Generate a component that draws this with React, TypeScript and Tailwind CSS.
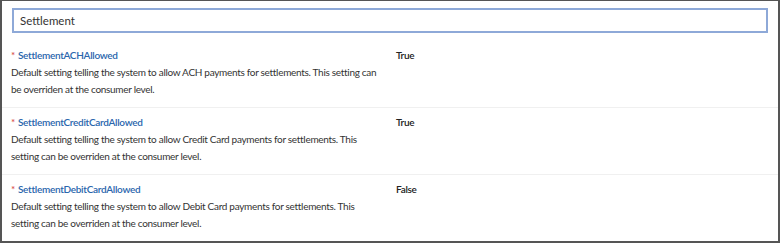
const settings = [
  {
    name: 'SettlementACHAllowed',
    lines: [
      'Default setting telling the system to allow ACH payments for settlements. This setting can',
      'be overriden at the consumer level.',
    ],
    value: 'True',
  },
  {
    name: 'SettlementCreditCardAllowed',
    lines: [
      'Default setting telling the system to allow Credit Card payments for settlements. This',
      'setting can be overriden at the consumer level.',
    ],
    value: 'True',
  },
  {
    name: 'SettlementDebitCardAllowed',
    lines: [
      'Default setting telling the system to allow Debit Card payments for settlements. This',
      'setting can be overriden at the consumer level.',
    ],
    value: 'False',
  },
];

export default function App() {
  return (
    <div
      className="w-[780px] h-[243px] bg-white border-x-2 border-b-2 border-t border-[#555] overflow-hidden"
      style={{ fontFamily: 'Lato, "Open Sans", sans-serif' }}
    >
      {/* Group search box */}
      <div className="pt-[7px] px-[10px]">
        <div className="h-[25px] border-2 border-[#8ea9d8] flex items-center pl-[6px] text-[11.5px] text-[#333]">
          Settlement
        </div>
      </div>

      {/* Settings */}
      <div className="mt-[8px]">
        {settings.map((s, i) => (
          <div
            key={s.name}
            className={`flex pl-[9px] pt-[6px] pb-[9px] tracking-[-0.3px] ${i > 0 ? 'border-t border-[#f0f0f0]' : ''}`}
          >
            <div className="w-[385px]">
              <div className="h-[17px] leading-[17px] text-[10px] font-semibold text-[#2a66ad]">
                <span className="text-[#d9534f] mr-[3px]">*</span>
                {s.name}
              </div>
              {s.lines.map((line) => (
                <div key={line} className="h-[17px] leading-[17px] text-[10px] text-[#333] whitespace-nowrap">
                  {line}
                </div>
              ))}
            </div>
            <div className="h-[17px] leading-[17px] text-[10px] font-semibold text-[#222]">{s.value}</div>
          </div>
        ))}
      </div>
    </div>
  );
}
